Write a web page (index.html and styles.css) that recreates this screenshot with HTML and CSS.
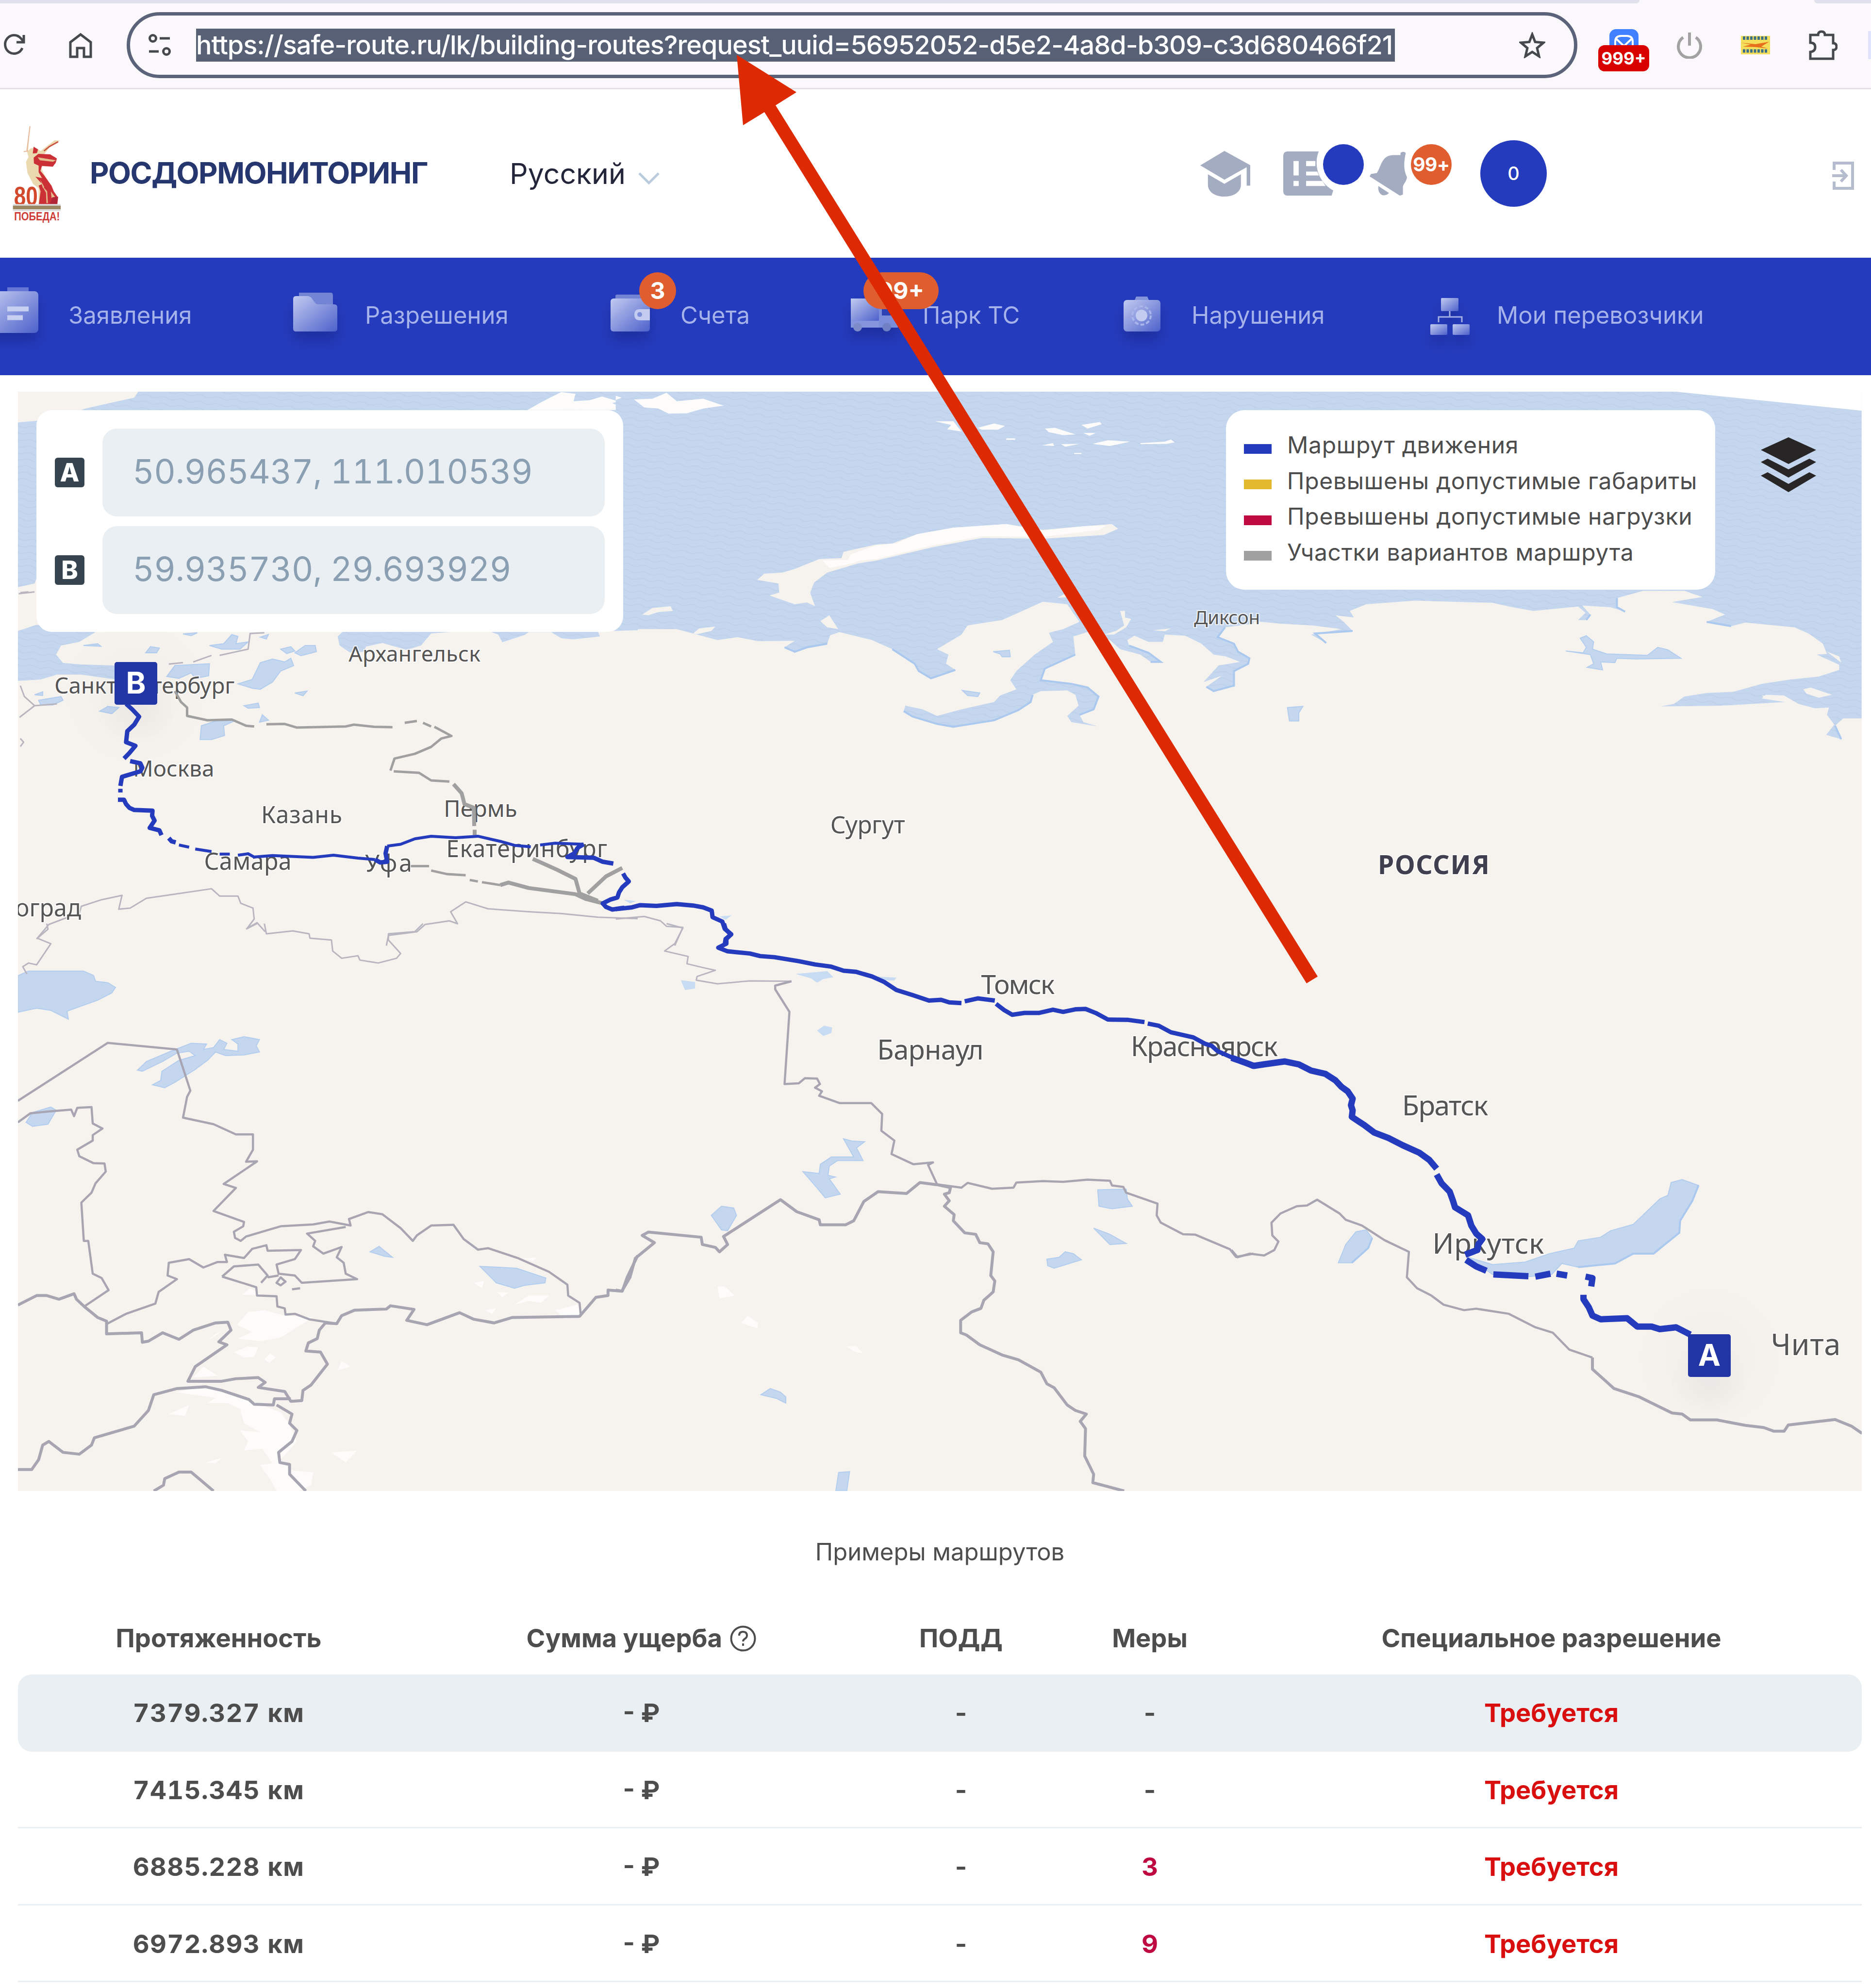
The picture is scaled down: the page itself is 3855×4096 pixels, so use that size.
FILE: index.html
```html
<!DOCTYPE html>
<html lang="ru">
<head>
  <meta charset="UTF-8">
  <meta name="viewport" content="width=device-width, initial-scale=1.0">
  <title>Росдормониторинг - Построение маршрутов</title>
  <link rel="stylesheet" href="styles.css">
</head>
<body>
  <div class="tabstrip">
    <div class="tabs-left"></div>
    <div class="tabs-right"></div>
  </div>
  <div class="toolbar">
    <svg class="reload" viewBox="0 0 47 47"><path d="M40 30A18.500 19 0 1 1 37 10L42 16M43 3V18H28"/></svg>
    <svg class="home" viewBox="0 0 50 54"><path d="M4 51V21L25 5L46 21V51H32V33H18V51Z"/></svg>
    <div class="omnibox">
      <svg class="tune" viewBox="0 0 50 46"><circle cx="11" cy="9" r="6.500"/><path d="M25 9H46M3 36H23"/><circle cx="39" cy="36" r="6.500"/></svg>
      <span class="url">https://safe-route.ru/lk/building-routes?request_uuid=56952052-d5e2-4a8d-b309-c3d680466f21</span>
      <svg class="star" viewBox="0 0 54 54"><path d="M27 5L33 20.500L50 22L37 33L41 50L27 41L13 50L17 33L4 22L21 20.500Z"/></svg>
    </div>
    <div class="ext-mail">
      <svg viewBox="0 0 60 60"><rect width="60" height="60" rx="14" fill="#4080ff"/><path d="M12 48V26Q12 14 24 14H36Q48 14 48 26V48M13 19L30 35L47 19" fill="none" stroke="#fff" stroke-width="4"/></svg>
      <span>999+</span>
    </div>
    <svg class="power" viewBox="0 0 54 56"><path d="M14 12A23 23 0 1 0 40 12M27 2V29"/></svg>
    <svg class="ext-flag" viewBox="0 0 60 38">
      <rect width="60" height="38" fill="#f3df5c"/>
      <path d="M4 4.500H56M4 31H56" stroke="#3d6f86" stroke-width="7" stroke-dasharray="5 2.500"/>
      <path d="M0 14L30 17L58 12L42 22L56 26L30 23L4 22L20 18Z" fill="#e8701d"/>
    </svg>
    <svg class="puzzle" viewBox="0 0 60 62"><path d="M4 10H20Q20 3 27 3T34 10H51V27Q58 27 58 34T51 41V59H4V45Q14 44 14 35T4 26Z"/></svg>
    <div class="ext-cut"></div>
  </div>

  <header class="header">
    <svg class="logo" viewBox="75 60 350 680">
      <path d="M203 78L191 170L181 245L193 285L176 320L186 395L225 470L262 500L262 612H390L385 560L345 480L295 395L275 350H350L385 310L375 285L300 268L340 215L408 175L370 172L275 245L240 222L205 228L190 245Z" fill="#ebd9af"/>
      <path d="M203 76L192 165L182 245M160 250L190 245" stroke="#e5b99a" stroke-width="7" fill="none"/>
      <path d="M228 216L258 235L250 260L222 262ZM260 265L340 268L386 296L378 326L358 352L285 346L274 380L300 412L350 482L365 520L390 556L388 616H262L275 520L262 480L285 470L240 420L285 430L262 390L262 345L230 330L228 290Z" fill="#cb3037"/>
      <path d="M255 288L380 308L360 318L270 308ZM285 480L320 520L325 600L315 600L312 530ZM345 520L375 560L350 565ZM272 440L300 490L292 500Z" fill="#e3bd8e"/>
      <path d="M298 245L335 215L395 182" stroke="#c9513f" stroke-width="9" fill="none"/>
      <path d="M355 560L395 556L388 616H335Z" fill="#b02636"/>
      <text class="logo-80" x="94" y="616" textLength="162" lengthAdjust="spacingAndGlyphs">80</text>
      <rect x="87" y="606" width="325" height="12" fill="#ddd"/>
      <rect x="87" y="617" width="325" height="25" fill="#9a8660"/>
      <rect x="87" y="642" width="325" height="12" fill="#ddd"/>
      <text class="logo-pobeda" x="96" y="716" textLength="310" lengthAdjust="spacingAndGlyphs">ПОБЕДА!</text>
    </svg>
    <span class="brand">РОСДОРМОНИТОРИНГ</span>
    <span class="lang">Русский</span>
    <svg class="chevron" viewBox="0 0 44 26"><path d="M2 3L22 23L42 3"/></svg>
    <svg class="icon-edu" viewBox="53 153 209 312" preserveAspectRatio="none">
      <path d="M154 153L262 250V390H247V264L154 350L53 252Z"/>
      <path d="M85 312L154 378L223 312V385C223 430 195 465 154 465S85 430 85 385Z"/>
    </svg>
    <div class="icon-docs">
      <svg viewBox="400 165 212 300" preserveAspectRatio="none">
        <path d="M418 165H551C530 250 545 370 612 430L605 465H418Q402 462 402 435V195Q402 168 418 165Z"/>
        <path d="M445 230H467V328H445ZM445 365H467V400H445ZM498 230H537V265H498ZM498 302H545L552 328H498ZM498 365H566L580 400H498Z" fill="#fff"/>
      </svg>
      <span class="dot"></span>
    </div>
    <div class="icon-bell">
      <svg viewBox="765 165 155 300" preserveAspectRatio="none">
        <path d="M893 190V175Q904 160 915 175C906 240 905 290 920 340C918 370 905 385 903 405V458L890 465L765 335L770 318L795 312C815 260 815 190 865 190Z"/>
        <path d="M801 400L845 447Q836 465 820 463Q798 450 801 400Z"/>
      </svg>
      <span class="count">99+</span>
    </div>
    <span class="avatar">0</span>
    <svg class="logout" viewBox="0 0 46 60"><path d="M4 18V4H42V56H4V42M0 30H28M18 18L29 30L18 42"/></svg>
  </header>

  <nav class="nav">
    <a class="nav-item">
      <svg viewBox="0 0 100 110">
        <defs>
          <linearGradient id="glass" x1="0" y1="0" x2="1" y2="1">
            <stop offset="0" stop-color="#c3cbf0"/>
            <stop offset="1" stop-color="#4c61cb"/>
          </linearGradient>
        </defs>
        <path d="M18 -3H62V20H18Z" fill="#6376d1"/>
        <rect x="-22" y="5" width="104" height="86" rx="8" fill="url(#glass)"/>
        <path d="M18 41.500H62M18 59.500H50" stroke="#c8d0f2" stroke-width="10"/>
      </svg>
      <span>Заявления</span>
    </a>
    <a class="nav-item">
      <svg viewBox="0 0 100 110">
        <path d="M8 8H74Q78 8 78 14V45H8Z" fill="#7384d5"/>
        <path d="M2 15H26Q32 15 36 22L42 30Q44 32 50 32H80Q87 32 87 38V82Q87 88 81 88H2Q-4 88 -4 82V21Q-4 15 2 15Z" fill="url(#glass)"/>
      </svg>
      <span>Разрешения</span>
    </a>
    <a class="nav-item">
      <svg viewBox="0 0 100 110">
        <rect x="10" y="12" width="66" height="30" rx="3" fill="#7384d5"/>
        <rect y="20" width="81" height="68" rx="6" fill="url(#glass)"/>
        <path d="M60 42H81V65H60Q49 65 49 53.500T60 42Z" fill="#c3cbf0"/>
        <circle cx="60" cy="53" r="5" fill="#7d8edb"/>
      </svg>
      <span>Счета</span>
      <b class="badge badge-round">3</b>
    </a>
    <a class="nav-item">
      <svg viewBox="0 0 100 110">
        <rect x="-4" y="65" width="97" height="15" fill="#8595dd"/>
        <path d="M54 36H80L93 56V80H54Z" fill="#7b8cdb"/>
        <path d="M60 42H75L84 55H60Z" fill="#2c41b4"/>
        <rect x="-4" y="20" width="58" height="46" fill="url(#glass)"/>
        <circle cx="10" cy="79" r="9" fill="#7d8cc9"/>
        <circle cx="70" cy="79" r="9" fill="#7080c4"/>
      </svg>
      <span>Парк ТС</span>
      <b class="badge badge-wide">99+</b>
    </a>
    <a class="nav-item">
      <svg viewBox="0 0 100 110">
        <path d="M24 30L30 16H53L59 30Z" fill="#8595dd"/>
        <rect x="4" y="23" width="76" height="65" rx="7" fill="url(#glass)"/>
        <circle cx="41" cy="55" r="19" fill="none" stroke="#aab5ea" stroke-width="4" stroke-dasharray="8 4"/>
        <circle cx="41" cy="55" r="12" fill="#c3cbf0"/>
      </svg>
      <span>Нарушения</span>
    </a>
    <a class="nav-item">
      <svg viewBox="0 0 100 110">
        <path d="M47 46V58M24 69V58H72V69" fill="none" stroke="#a3afe6" stroke-width="3"/>
        <rect x="29" y="19" width="36" height="27" rx="2" fill="url(#glass)"/>
        <rect x="7" y="73" width="35" height="22" rx="2" fill="url(#glass)"/>
        <rect x="53" y="73" width="35" height="22" rx="2" fill="url(#glass)"/>
      </svg>
      <span>Мои перевозчики</span>
    </a>
  </nav>

  <main class="content">
    <div class="map">
      <svg class="map-canvas" viewBox="0 0 3799 2265">
        <defs>
          <pattern id="waves" width="44" height="18" patternUnits="userSpaceOnUse" patternTransform="rotate(8)">
            <rect width="44" height="18" fill="#c5d7ef"/>
            <path d="M0 9Q11 3 22 9T44 9" fill="none" stroke="#bdd0e9" stroke-width="2"/>
          </pattern>
        </defs>

        <!-- north-west -->
        <g transform="translate(-37 -36.700) scale(.838 .7513)">
          <path class="sea" d="M340 49H1568V703L1470 706L1475 720L1410 728L1380 725L1355 708L1300 708L1290 716L1235 736L1225 715L1190 700L1060 712L1035 745L1000 757L940 738L900 748L895 762L860 764L835 745L830 720L850 700L600 650L90 560L85 575L44 585V133L130 125L210 95L330 65Z"/>
          <path class="sea" d="M44 705L90 688L235 708L195 735L150 745L138 770L155 793L200 797L285 800V838L200 825L140 825L100 838L44 842Z"/>
          <path class="snow" d="M1297 99L1330 78L1380 50L1415 55L1410 75L1450 72L1480 62L1520 75L1568 50V62L1505 80L1545 99Z"/>
          <path class="lake" d="M410 830L430 800L515 795L513 828L480 835L470 820L440 835ZM585 850L620 838L640 792L670 782L700 790L715 780L722 800L690 815L670 845L640 865L620 862ZM515 745L550 740L570 715L585 720L580 740L610 735L590 755L545 755ZM690 755L715 748L725 760L705 767ZM725 765L750 745L775 745L778 762L740 773ZM358 765L370 748L392 752L385 765ZM492 1003L495 965L530 952L580 950L550 965L552 992L520 1003ZM600 910L635 903L638 915L610 917ZM725 875L755 870L745 883ZM638 955L645 935L660 950ZM245 925L265 912L292 915L275 932ZM95 895L150 885L155 895L130 908L100 908ZM205 745L240 740L248 747ZM450 713L485 710L470 718ZM85 880L105 872L105 882ZM640 722L660 715L655 727Z"/>
          <path class="border thin" d="M415 796L450 792M475 790L520 772M540 772L610 755L615 712L650 710M46 603L85 598M50 855L60 885L85 910L48 942M85 910L140 905M50 1000L58 1010L50 1022M50 600L70 598"/>
          <path class="border thin" d="M90 1550L120 1510L155 1495L195 1480L200 1460L250 1442L300 1430L292 1468L320 1465L360 1438L440 1425L520 1412L540 1432L585 1432L592 1452L622 1465L625 1495L608 1520L632 1505L652 1530M950 1568L955 1540L1025 1530L1045 1510L1105 1500L1125 1508L1108 1475L1145 1448L1200 1467L1300 1475L1380 1480L1470 1490L1568 1494"/>
        </g>

        <!-- north -->
        <g transform="translate(1231.700 -36.700) scale(.838 .7513)">
          <path class="sea" d="M0 49H1568V685L1498 695L1480 722L1520 740L1530 762L1558 780L1555 795L1520 815L1520 855L1470 870L1452 858L1490 828L1445 845L1482 800L1535 790L1500 775L1470 770L1440 740L1400 718L1350 715L1345 735L1310 735L1275 718L1258 730L1262 745L1310 765L1340 790L1315 790L1290 770L1240 755L1215 730L1160 708L1125 720L1130 770L1055 808L1045 840L1120 850L1160 860L1187 885L1175 920L1140 935L1150 955L1185 967L1120 955L1110 938L1138 910L1130 880L1110 868L1045 870L1025 880L1020 900L990 922L930 950L830 968L790 960L730 940L708 925L712 910L755 920L790 938L850 920L930 900L945 882L985 865L970 840L985 815L1030 770L1075 735L1065 710L1100 700L1140 680L1110 632L1050 625L1000 650L950 675L865 690L850 715L790 755L818 770L812 795L835 812L775 835L745 815L735 795L680 755L630 730L550 708L527 717L520 740L470 750L440 762L415 750L440 732L350 733L300 722L250 730L190 712L150 700L60 700L0 705Z"/>
          <path class="coast" d="M1498 695L1480 722L1520 740L1530 762L1558 780L1555 795L1520 815L1520 855L1470 870L1452 858M1130 770L1055 808L1045 840L1120 850L1160 860L1187 885L1175 920L1140 935M1025 880L1020 900L990 922L930 950L830 968L790 960L730 940L708 925M835 812L775 835L745 815L735 795L680 755M520 740L470 750L440 762L415 750M1262 745L1310 765L1340 790L1315 790"/>
          <path class="land" d="M348 565L365 548L410 545L440 535L500 508L555 505L560 488L640 468L680 465L740 440L830 422L960 412L1050 428L1150 418L1220 412L1235 425L1200 442L1050 452L900 450L780 475L640 512L595 520L520 545L488 572L478 600L490 637L470 627L440 632L378 608L402 600L400 575Z"/>
          <path class="snow" d="M508 512L570 510L578 495L640 470L690 465L740 440L830 422L960 412L1050 430L1150 418L1205 416L1190 428L1050 447L900 445L780 470L640 508L600 512L580 520L525 532Z"/>
          <path class="snow" d="M45 70L90 68L125 52L150 75L215 68L265 87L215 95L175 108L130 109L105 95L70 92ZM785 130H830L850 158L815 152L825 140ZM890 148L930 136L957 143L940 153L900 153ZM960 177H982V181H960ZM1055 150L1080 148L1130 166L1100 168L1065 160ZM1145 140L1190 132L1195 138L1160 150ZM1150 162L1180 162L1165 170ZM1048 196L1075 190L1078 198ZM1095 193L1140 192L1105 200ZM1172 192L1210 182L1265 186L1215 198ZM1290 190L1350 186L1365 180L1374 188L1355 192L1290 193ZM1127 217H1145V220H1127ZM0 60L15 65L0 72Z"/>
          <path class="land" d="M65 660L90 642L135 637L140 650L105 653L80 662ZM190 712L205 698L245 693L235 705L200 714ZM503 678L525 662L547 700L520 695ZM1086 614L1110 600L1130 612ZM1200 715L1230 705L1250 690L1240 650L1252 650L1252 668L1267 672L1255 695L1225 715ZM1320 703L1365 698L1350 706Z"/>
          <path class="lake" d="M928 762L968 758L970 776L950 776L945 768ZM852 868L895 875L890 885L865 882Z"/>
          <path class="pale" d="M255 1488L285 1485L270 1497ZM20 1442L50 1446L35 1452Z"/>
          <path class="border thin" d="M0 1495L70 1488L110 1500L125 1515L165 1518L145 1568"/>
        </g>

        <!-- north-east -->
        <g transform="translate(2500.400 -36.700) scale(.8403 .7513)">
          <path class="sky" d="M1085 40V49L1545 101V40Z"/>
          <path class="sea" d="M0 49H1090L1545 101V945H1500L1480 965L1495 1002L1458 990L1478 962L1460 935L1465 915L1430 917L1390 905L1355 882L1310 880L1300 890L1357 900L1200 910L1052 912L1085 905L1110 885L1165 875L1230 872L1300 850L1370 838L1440 830L1490 812L1490 798L1435 770L1460 768L1450 740L1415 712L1380 695L1260 682L1225 692L1165 680L1210 660L1180 645L1080 626L1155 612L1110 595L1010 595L945 615L945 640L965 652L930 640L860 635L880 660L870 675L850 675L868 655L850 638L830 640L740 650L690 640L640 628L450 622L330 632L290 650L300 668L255 662L275 680L297 705L205 712L232 738L195 715L270 700L200 690L120 685L54 678H0Z"/>
          <path class="land" d="M1402 865L1420 860L1472 880L1440 888L1410 877ZM1300 882L1330 882L1350 895L1310 890ZM1460 762L1490 775L1495 792Z"/>
          <path class="lake" d="M820 760L862 765L870 750L855 725L870 718L888 735L885 755L920 768L1020 772L1045 750L1070 757L1102 780L990 782L945 780L940 792L905 790L910 812L872 805L888 795L880 770ZM137 915L175 912L165 930L165 952H142Z"/>
          <path class="coast" d="M945 615V640L965 652M880 660L870 675M297 705L205 712L232 738M1225 692L1165 680M1480 965L1495 1002"/>
        </g>

        <!-- south-west -->
        <g transform="translate(-37 1096) scale(.838 .7513)">
          <path class="lake" d="M44 143L70 130H205L230 142L235 158L265 162L284 175L275 190L240 210L165 240L168 262L125 238L90 232L44 243Z"/>
          <path class="lake" d="M338 402L360 378L420 350L470 328L508 330L500 345L525 340L540 318L558 328L550 345L585 350L585 330L570 318L600 310L638 318L630 335L638 352L600 360L555 362L530 352L510 375L480 400L430 435L405 450L375 442L395 430L398 405L440 375L480 362L465 350L435 355L400 378L350 405ZM64 545L80 518L125 503L138 512L118 550L80 556ZM910 900L932 885L965 915L945 912ZM1180 940L1220 942L1270 945L1342 972L1340 985L1290 992L1265 1000L1220 985Z"/>
          <path class="snow" d="M583 1100L610 1065L650 1060L700 1075L770 1080L740 1100L690 1135L640 1145L585 1138L620 1120ZM575 1175L610 1160L635 1162L625 1188L600 1190ZM650 1195L665 1178L678 1190L662 1205ZM475 1245L500 1215L535 1240ZM430 1285L500 1270L560 1280L620 1310L690 1340L710 1370L730 1420L690 1470L720 1500L770 1505L765 1540L735 1556H680L665 1525L640 1485L670 1480L645 1440L600 1445L610 1420L590 1390L640 1395L600 1370L590 1330L560 1315L510 1315L530 1300ZM415 1345L465 1320L455 1350ZM505 1478L545 1465L530 1480ZM815 1450L878 1445L850 1478ZM830 1225L840 1200L862 1215ZM1165 985L1190 980L1185 1000ZM1222 1010L1250 1012L1235 1025ZM1265 1045L1300 1020L1350 1020L1330 1040L1300 1035ZM1192 1060L1220 1055L1210 1070ZM1365 1060L1420 1045L1428 1070L1390 1085ZM1285 918L1320 916L1310 925ZM595 1018L615 1000L645 1018ZM508 1145L530 1125L550 1115Z"/>
          <path class="border thin" d="M115 0L118 15L92 40L125 55L90 113L70 108L56 118L66 138M605 15L632 0M650 0L655 28L720 20L760 28L762 40L815 45L818 75L840 95L880 88L885 100L930 108L975 95L985 82L955 45L955 28L1020 22L1040 0"/>
          <path class="border mid" d="M44 486L265 327L435 345L468 458L460 475L450 532L525 550L580 578H622L622 620L605 653L632 652L550 714L580 725L525 788L600 818L598 830L575 845L578 862L592 870L605 858L690 830L770 825L810 817L862 828L858 810L905 791L940 797L985 835L1015 870L1025 855L1060 828L1115 826L1140 865L1175 894L1200 890L1275 918L1350 955L1395 990L1397 1020L1425 1040L1428 1075M44 545L75 520L120 515L175 510L182 528L190 505L225 503L228 548L252 562L228 580V595L190 620L195 638L230 657L257 658L260 680L235 712L225 738L200 765L206 870H217L228 960L250 972L267 1005L207 1050"/>
          <path class="border" d="M44 1046L90 1020H115L145 1030L182 1015L188 1030L207 1050L240 1080L262 1090V1125L348 1122L350 1148L365 1145L400 1122L440 1140L475 1115L530 1095L560 1093L568 1115L538 1147L558 1155L480 1215L462 1255L545 1255L580 1248L635 1245L652 1258L635 1272L700 1283L715 1310L742 1308L745 1280L765 1265L805 1208L788 1175L752 1172L758 1150L780 1138L785 1115L800 1095L828 1097L840 1075L872 1060L950 1057L960 1048L1018 1058L1000 1088L1050 1100L1130 1067L1165 1085L1215 1095L1260 1080L1425 1077L1465 1025L1495 1020V1005L1530 1008L1542 970L1568 910"/>
          <path class="border mid" d="M262 1098L310 1070L382 1042L390 1010L435 975L412 965L415 930L465 920L500 943L535 928L558 928L553 908L600 917L620 892L655 882L658 897L740 895L725 920L680 935L685 960L725 965L742 985L878 975L850 960L845 930L828 915L840 887L795 905L770 885L775 870L755 850L850 832M546 968L575 940L635 935L658 965L642 985M546 968L630 997L632 1020L680 1022L682 1050L700 1055L702 1072L725 1070L760 1085L828 1097M658 970L685 965M680 985L690 970L702 982L690 992ZM718 1003L738 1000"/>
          <path class="border" d="M44 1497H78L95 1470L105 1430L120 1420L155 1450L195 1455L225 1430L232 1410L330 1378L365 1335L378 1292L435 1275L505 1270L545 1280L612 1305L625 1318L672 1320L675 1303H715M680 1320L718 1345L712 1370L730 1390L718 1420L685 1450L688 1478L712 1483L712 1510L752 1556M378 1556L402 1540L405 1522L440 1504H470L525 1556"/>
        </g>

        <!-- south -->
        <g transform="translate(1231.700 1096) scale(.838 .7513)">
          <path class="pale" d="M442 138L520 130L535 147L510 152L495 162L480 150ZM640 145L690 148L685 156L650 155ZM160 155L195 160L195 178L170 182ZM495 293L512 280L532 285L530 300L510 308Z"/>
          <path class="lake" d="M235 800L260 775L290 780L297 800L275 842L260 840ZM460 680L500 685L503 660L530 640L585 640L560 590L580 596L612 598L592 615L608 650L545 650L525 665L522 690L540 695L525 700L552 742L515 752L495 725ZM1185 730L1255 728L1258 755L1270 775L1220 782L1188 775ZM1175 835L1215 852L1255 877L1215 880ZM1060 920L1090 915L1105 900L1125 905L1145 922L1078 945L1062 938ZM357 1292L380 1275L405 1285L418 1298V1315L395 1302ZM548 1505L575 1503L568 1556H541Z"/>
          <path class="snow" d="M250 995L268 995L292 1020L255 1028ZM308 1095L325 1075L350 1095L348 1110ZM567 1160L590 1158L608 1178L590 1175Z"/>
          <path class="border thin" d="M125 0L165 12L145 55L120 75L178 90L175 110L212 120L245 128L200 145L198 155L250 165L330 157L432 158"/>
          <path class="border mid" d="M432 158L392 170V180L427 242L415 440L450 438L465 424L495 425L502 440L490 450L507 460L500 472L550 492L628 492L655 522L653 568L685 595L678 632L732 660L780 655L768 662L790 715L850 724L865 711L925 727L978 724L985 710L1050 706L1100 708L1160 702L1215 705L1220 718L1248 722L1255 738L1332 768L1330 800L1340 820L1395 852L1425 853L1510 893L1525 914L1568 905"/>
          <path class="border" d="M0 1005L15 1008L35 970L48 918L95 875L65 855L80 846L210 860L213 880L245 888L255 900L275 880L265 858L405 757L445 790L500 812L503 826H565L585 815L610 762L645 735L715 740L748 710L790 716L823 724L820 738L808 742L820 760L808 775L832 798L830 815L858 848L885 852L895 875L915 878L928 900L922 965L932 980L928 1010L905 1033L898 1055L875 1065L848 1088V1122L862 1128L895 1155L950 1183L990 1196L1045 1230L1060 1262L1078 1273L1110 1320L1130 1335L1157 1345L1142 1365L1155 1385L1153 1460L1175 1510L1173 1533L1250 1556"/>
        </g>

        <!-- south-east -->
        <g transform="translate(2500.400 1096) scale(.8403 .7513)">
          <path class="lake" d="M580 915L640 935L720 928L780 905L840 890L850 870L905 860L930 842L985 825L1050 755L1070 745L1078 710L1105 702L1145 718L1130 760L1100 815L1098 848L1060 882L1035 905L985 905L940 932L850 942L810 932L785 962L730 968L640 962ZM262 930L280 880L305 845L330 840L345 862L335 890L295 930Z"/>
          <path class="coast" d="M1145 718L1130 760L1100 815L1098 848L1060 882L1035 905L985 905L940 932L850 942M345 862L335 890L295 930"/>
          <path class="border mid" d="M0 895L15 915L45 905L80 910L105 895L115 872L100 855L98 820L120 795L160 775L185 773L210 757L265 795L280 812L320 828L375 868L435 900L430 970L455 1000L490 1020L520 1045L570 1060L600 1056L680 1070L745 1107L788 1122L828 1168L885 1190"/>
          <path class="border" d="M885 1190V1222L938 1275L1000 1298L1080 1342L1105 1345L1125 1361L1190 1361L1260 1376L1305 1382L1330 1392H1355L1365 1375L1480 1360L1520 1378L1546 1398"/>
        </g>

        <g class="labels" transform="translate(-37 -807) scale(2.6118)">
          <text x="275" y="522" font-size="17" textLength="104">Архангельск</text>
          <text x="43" y="547" font-size="17.500" textLength="142">Санкт-Петербург</text>
          <text x="105" y="612.500" font-size="17.500" textLength="64">Москва</text>
          <text x="206" y="649.500" font-size="18.500" textLength="64">Казань</text>
          <text x="350" y="644.500" font-size="18" textLength="58">Пермь</text>
          <text x="352" y="676" font-size="18.500" textLength="127">Екатеринбург</text>
          <text x="161" y="686" font-size="18.500" textLength="69">Самара</text>
          <text x="288" y="687.500" font-size="18.500" textLength="37">Уфа</text>
          <text x="64" y="723" font-size="18.500" text-anchor="end">Волгоград</text>
          <text x="655" y="657.500" font-size="19" textLength="59">Сургут</text>
          <text x="942" y="492.500" font-size="14.800" textLength="52">Диксон</text>
          <text class="country" x="1087" y="689.500" font-size="20.500" textLength="88">РОССИЯ</text>
          <text x="774" y="784" font-size="21" textLength="58">Томск</text>
          <text x="692" y="836" font-size="21.500" textLength="84">Барнаул</text>
          <text x="892" y="833" font-size="21.500" textLength="116">Красноярск</text>
          <text x="1106" y="880" font-size="22" textLength="68">Братск</text>
          <text x="1130" y="989" font-size="22.500" textLength="88">Иркутск</text>
          <text x="1397" y="1069" font-size="23.500" textLength="55">Чита</text>
        </g>

        <!-- route variants -->
        <g class="variant" transform="translate(-37 -36.700) scale(.838 .7513)">
          <path d="M430 870L445 900L460 915V938L510 950L570 948L605 965L625 967M655 961L700 960L730 970L850 967L870 962L920 968L965 969M995 957L1025 952M1040 957L1060 967M1068 968L1110 993L1085 1000L1060 1023L1020 1042L970 1055L960 1088M968 1090L1030 1094L1060 1115L1105 1118M1010 1350H1055M1060 1362L1100 1372L1145 1375M1155 1388L1175 1392M1185 1394L1230 1402"/>
          <path class="wide" d="M1115 1125L1135 1150L1142 1180L1165 1190L1166 1240M1167 1250V1265M1230 1402L1250 1395L1300 1410L1415 1427L1440 1440L1482 1452M1310 1330L1370 1360L1415 1385L1425 1425L1470 1445M1445 1425L1490 1378L1530 1355"/>
        </g>

        <!-- main route -->
        <g class="route">
          <g transform="translate(-37 -36.700) scale(.838 .7513)">
            <path class="fine" d="M440 1292L465 1298M480 1303L520 1310M540 1317H565M585 1320L610 1316L625 1325L670 1321L770 1326L820 1320L880 1328L922 1332M952 1295L985 1290L1020 1275L1060 1268L1120 1272L1175 1268L1230 1282L1265 1293L1305 1297M1328 1292L1365 1287L1435 1290"/>
            <path d="M310 905L325 920L342 940L330 962L313 980L310 1010L333 1020L318 1040L305 1055M320 1062L345 1068L350 1080L345 1090L300 1105L296 1130M296 1138V1148M290 1168L305 1168L310 1180L318 1190L330 1196L375 1198L374 1212L380 1225L368 1245L392 1252L397 1265M415 1273L422 1282L432 1285M922 1332L935 1340L952 1338L948 1315L952 1295M1435 1290L1420 1300L1412 1315L1395 1325L1460 1327L1482 1338L1508 1343M1532 1370L1538 1382L1546 1392L1530 1408L1522 1422L1518 1436L1500 1442L1482 1452L1490 1462L1505 1469L1535 1464"/>
          </g>
          <g transform="translate(1231.700 -36.700) scale(.838 .7513)">
            <path d="M0 1468L40 1463L60 1457L100 1459L150 1454L190 1458L215 1463L236 1472L238 1490L262 1502L268 1522L284 1537L270 1550L268 1565"/>
          </g>
          <g transform="translate(1231.700 1096) scale(.838 .7513)">
            <path d="M266 0L270 15L283 30L272 42V55L252 66L275 76L330 82L355 89L390 92L450 103L490 112L530 118L560 129L590 132L630 145L660 160L690 182L730 196L770 211L800 209L820 216L850 218M858 213L890 205L932 211M935 220L955 237L975 250L1005 245L1040 245L1075 236L1100 242L1130 235L1155 234L1180 245L1210 263L1260 264L1300 270M1308 274L1335 280L1365 298L1420 312L1450 330L1465 335L1480 350L1525 372L1568 393"/>
          </g>
          <g class="strong" transform="translate(2500.400 1096) scale(.8403 .7513)">
            <path d="M0 368L30 380L55 390L85 385L130 378L165 386L195 403L230 412L255 430L270 448L285 460L297 480L293 498L297 512L295 530L325 552L350 573L385 588L420 608L460 628L485 648L503 672M503 688L515 712L535 735L543 760L548 778L580 800L588 828L600 850L615 865L605 880L603 895L573 908M575 922L600 940L625 952M642 962L728 967M745 968L782 960M797 960L823 965M868 968L885 972L882 995M863 1018V1030L876 1052L885 1075L905 1085L970 1082L995 1105L1030 1105L1050 1112L1090 1107L1125 1127"/>
          </g>
        </g>

        <g class="halo">
          <circle cx="3485" cy="1990" r="140"/>
          <circle cx="3485" cy="1990" r="95"/>
          <circle cx="242" cy="620" r="140"/>
          <circle cx="242" cy="620" r="95"/>
        </g>
      </svg>

      <span class="marker marker-b">B</span>
      <span class="marker marker-a">A</span>

      <div class="points">
        <div class="point"><b>A</b><div class="point-input">50.965437, 111.010539</div></div>
        <div class="point"><b>B</b><div class="point-input">59.935730, 29.693929</div></div>
      </div>

      <ul class="legend">
        <li><i class="c-route"></i>Маршрут движения</li>
        <li><i class="c-size"></i>Превышены допустимые габариты</li>
        <li><i class="c-load"></i>Превышены допустимые нагрузки</li>
        <li><i class="c-variant"></i>Участки вариантов маршрута</li>
      </ul>

      <svg class="layers" viewBox="0 0 114 113">
        <path d="M57 0L114 26L57 55L0 26Z"/>
        <path d="M0 51L14 44L57 66L100 44L114 51L57 83Z"/>
        <path d="M0 79L14 72L57 96L100 72L114 79L57 113Z"/>
      </svg>
    </div>

    <h2 class="title">Примеры маршрутов</h2>

    <table class="routes">
      <colgroup>
        <col class="col-length"><col class="col-damage"><col class="col-podd"><col class="col-measures"><col>
      </colgroup>
      <thead>
        <tr>
          <th>Протяженность</th>
          <th>Сумма ущерба <svg class="help" viewBox="0 0 54 54"><circle cx="27" cy="27" r="24.500"/><path d="M19 21Q19 13 27 13T35 21Q35 25 30 28Q27 30 27 33M27 37V42"/></svg></th>
          <th>ПОДД</th>
          <th>Меры</th>
          <th>Специальное разрешение</th>
        </tr>
      </thead>
      <tbody>
        <tr class="active"><td>7379.327 км</td><td>- ₽</td><td>-</td><td>-</td><td class="required">Требуется</td></tr>
        <tr><td>7415.345 км</td><td>- ₽</td><td>-</td><td>-</td><td class="required">Требуется</td></tr>
        <tr><td>6885.228 км</td><td>- ₽</td><td>-</td><td class="measures">3</td><td class="required">Требуется</td></tr>
        <tr><td>6972.893 км</td><td>- ₽</td><td>-</td><td class="measures">9</td><td class="required">Требуется</td></tr>
      </tbody>
    </table>
  </main>

  <svg class="arrow" viewBox="0 0 3855 4096">
    <path d="M1518 113L1641 190L1598 217L2715 2012L2692 2026L1575 231L1531 258Z"/>
  </svg>
</body>
</html>
```
FILE: styles.css
```css
* {
  box-sizing: border-box;
}
body {
  margin: 0;
  width: 3855px;
  height: 4096px;
  overflow: hidden;
  position: relative;
  background: #fff;
  color: #4d4d4d;
  font-family: Inter, "Liberation Sans", sans-serif;
}
svg {
  display: block;
  flex: none;
}

/* browser */
.tabstrip {
  display: flex;
  justify-content: space-between;
  height: 7px;
  background: #faf8fa;
}
.tabs-left {
  width: 3378px;
  background: #dfe1ec;
  border-bottom-right-radius: 7px;
}
.tabs-right {
  width: 117px;
  background: #dfe1ec;
  border-bottom-left-radius: 7px;
}
.toolbar {
  display: flex;
  align-items: center;
  height: 177px;
  padding: 0 0 3px 6px;
  background: #faf8fa;
  border-bottom: 3px solid #e2e0e2;
}
.toolbar svg {
  fill: none;
  stroke: #45484d;
  stroke-width: 5;
}
.reload {
  width: 47px;
}
.home {
  width: 50px;
  margin-left: 88px;
}
.omnibox {
  display: flex;
  align-items: center;
  flex: none;
  width: 2989px;
  height: 136px;
  margin-left: 70px;
  padding: 0 59px 0 36px;
  border: 7px solid #5a6379;
  border-radius: 68px;
}
.tune {
  width: 50px;
}
.url {
  margin-left: 50px;
  width: 2470px;
  height: 68px;
  line-height: 68px;
  background: #586076;
  color: #fff;
  font-size: 54px;
  font-weight: 500;
  letter-spacing: -0.97px;
  white-space: nowrap;
}
.star {
  width: 54px;
  margin-left: auto;
}
.ext-mail {
  position: relative;
  flex: none;
  width: 105px;
  height: 66px;
  margin-left: 43px;
}
.ext-mail svg {
  width: 60px;
  margin: 0 auto;
  stroke: none;
}
.ext-mail span {
  position: absolute;
  left: 0;
  top: 33px;
  width: 105px;
  height: 54px;
  border-radius: 13px;
  background: #d90000;
  color: #fff;
  font-size: 35px;
  font-weight: 700;
  line-height: 54px;
  text-align: center;
}
.toolbar .power {
  width: 54px;
  margin-left: 56px;
  stroke: #a2a2a2;
  stroke-width: 6;
}
.toolbar .ext-flag {
  width: 60px;
  margin-left: 79px;
  stroke: none;
}
.puzzle {
  width: 60px;
  margin-left: 79px;
}
.ext-cut {
  width: 6px;
  height: 58px;
  margin-left: 63px;
  background: #dfe3fb;
}

/* header */
.header {
  display: flex;
  align-items: center;
  height: 347px;
  padding-left: 23px;
}
.logo {
  width: 106px;
  height: 206px;
  overflow: visible;
}
.logo-80 {
  fill: #d2492b;
  font-family: "Liberation Sans", sans-serif;
  font-size: 184px;
  font-weight: 700;
}
.logo-pobeda {
  fill: #cf3b37;
  font-family: "Liberation Sans", sans-serif;
  font-size: 82px;
  font-weight: 700;
}
.brand {
  width: 865px;
  margin-left: 56px;
  margin-top: -4px;
  color: #26366f;
  font-size: 61px;
  font-weight: 700;
  letter-spacing: -1.5px;
}
.lang {
  width: 265px;
  color: #23263a;
  font-size: 59px;
}
.chevron {
  width: 44px;
  margin-top: 18px;
  fill: none;
  stroke: #b9cbdc;
  stroke-width: 5;
}
.icon-edu {
  width: 103px;
  height: 94px;
  margin-left: 1114px;
  fill: #a4acc1;
}
.icon-docs {
  position: relative;
  width: 104px;
  margin-left: 67px;
}
.icon-docs svg {
  width: 104px;
  height: 91px;
  fill: #a4acc1;
}
.icon-bell {
  position: relative;
  width: 77px;
  margin-left: 75px;
}
.icon-bell svg {
  width: 77px;
  height: 91px;
  fill: #a4acc1;
}
.dot,
.count {
  position: absolute;
  top: -15px;
  left: 83px;
  width: 84px;
  height: 84px;
  border-radius: 50%;
  background: #243bbd;
}
.count {
  left: 85px;
  background: #df5d2e;
  color: #fff;
  font-size: 39px;
  font-weight: 700;
  letter-spacing: -0.5px;
  line-height: 84px;
  text-align: center;
}
.avatar {
  width: 137px;
  height: 137px;
  margin-left: 151px;
  border-radius: 50%;
  background: #243bbd;
  color: #fff;
  font-size: 38px;
  font-weight: 500;
  line-height: 137px;
  text-align: center;
}
.logout {
  width: 46px;
  margin-left: 588px;
  margin-top: 8px;
  fill: none;
  stroke: #b4bccd;
  stroke-width: 6;
}

/* menu */
.nav {
  display: grid;
  grid-template-columns: 611px 650px 499px 554px 629px 912px;
  height: 242px;
  margin-left: -3px;
  background: #243bbd;
}
.nav-item {
  position: relative;
  display: flex;
  align-items: center;
  color: #a6b3ea;
  font-size: 49px;
  white-space: nowrap;
}
.nav-item span {
  margin-top: -5px;
}
.nav-item svg {
  width: 100px;
  margin-right: 44px;
  margin-top: -4px;
  overflow: visible;
  filter: drop-shadow(0 18px 12px rgba(20, 30, 110, 0.35));
}
.badge {
  position: absolute;
  top: 30px;
  height: 76px;
  border-radius: 38px;
  background: #df5d2e;
  color: #fff;
  font-size: 48px;
  font-weight: 700;
  line-height: 76px;
  text-align: center;
}
.badge-round {
  left: 59px;
  width: 76px;
}
.badge-wide {
  left: 22px;
  width: 155px;
}

/* map */
.content {
  padding: 34px 19px 0 37px;
}
.map {
  position: relative;
  height: 2265px;
  overflow: hidden;
  background: #f6f3ee;
}
.map-canvas {
  width: 3799px;
  height: 2265px;
}
.sea {
  fill: url(#waves);
}
.sky {
  fill: #fff;
}
.land {
  fill: #f6f3ee;
}
.snow {
  fill: #fdfcfa;
}
.lake {
  fill: #c5d7ef;
  stroke: #b3cdef;
  stroke-width: 2;
  vector-effect: non-scaling-stroke;
}
.pale {
  fill: #c7dcf3;
}
.coast {
  fill: none;
  stroke: #abc8ee;
  stroke-width: 4;
  vector-effect: non-scaling-stroke;
}
.border {
  fill: none;
  stroke: #a7a5b1;
  stroke-width: 6;
  stroke-linejoin: round;
  vector-effect: non-scaling-stroke;
}
.border.mid {
  stroke-width: 4.5px;
}
.border.thin {
  stroke: #b7b5bf;
  stroke-width: 3px;
}
.labels {
  fill: #555;
  font-family: "Noto Sans", sans-serif;
  paint-order: stroke;
  stroke: rgba(255, 255, 255, 0.8);
  stroke-width: 1.5px;
}
.country {
  fill: #3f3f50;
  font-weight: 700;
}
.variant path,
.route path {
  fill: none;
  stroke: #a0a0a0;
  stroke-width: 5;
  stroke-linejoin: round;
  vector-effect: non-scaling-stroke;
}
.variant .wide {
  stroke-width: 8;
}
.route path {
  stroke: #243bbd;
  stroke-width: 9;
}
.route .fine {
  stroke-width: 6;
}
.route .strong path {
  stroke-width: 13;
}
.halo {
  fill: rgba(120, 110, 130, 0.008);
}
.marker {
  position: absolute;
  width: 88px;
  height: 88px;
  border-radius: 5px;
  background: #2135a5;
  box-shadow: 0 45px 50px rgba(60, 60, 90, 0.05);
  color: #fff;
  font-size: 62px;
  font-weight: 700;
  line-height: 86px;
  text-align: center;
}
.marker-b {
  left: 199px;
  top: 557px;
}
.marker-a {
  left: 3441px;
  top: 1942px;
}
.points {
  position: absolute;
  left: 38px;
  top: 38px;
  display: flex;
  flex-direction: column;
  gap: 20px;
  width: 1209px;
  height: 457px;
  padding: 38px;
  border-radius: 32px;
  background: #fff;
}
.point {
  display: flex;
  align-items: center;
  gap: 37px;
}
.point b {
  width: 61px;
  height: 61px;
  border-radius: 6px;
  background: #364450;
  color: #fff;
  font-size: 52px;
  font-weight: 800;
  line-height: 61px;
  text-align: center;
}
.point-input {
  flex: 1;
  height: 181px;
  padding-left: 62px;
  border-radius: 30px;
  background: #e9eff2;
  color: #8b9fb3;
  font-size: 69px;
  font-variant-numeric: tabular-nums;
  letter-spacing: -0.5px;
  line-height: 176px;
}
.legend {
  position: absolute;
  left: 2489px;
  top: 38px;
  width: 1008px;
  height: 370px;
  margin: 0;
  padding: 35px 37px;
  border-radius: 38px;
  background: #fff;
  list-style: none;
}
.legend li {
  display: flex;
  align-items: center;
  height: 73.5px;
  color: #4d4d4d;
  font-size: 48px;
  letter-spacing: 0.7px;
  white-space: nowrap;
}
.legend i {
  width: 57px;
  height: 20px;
  margin: 16px 32px 0 0;
}
.c-route {
  background: #243bbd;
}
.c-size {
  background: #e3b92f;
}
.c-load {
  background: #bf0a41;
}
.c-variant {
  background: #a0a0a0;
}
.layers {
  position: absolute;
  left: 3591px;
  top: 94px;
  width: 114px;
  fill: #272525;
}

/* table */
.title {
  height: 224px;
  margin: 0;
  padding-top: 14px;
  font-size: 49px;
  font-weight: 400;
  line-height: 224px;
  text-align: center;
}
.routes {
  width: 100%;
  table-layout: fixed;
  border-collapse: separate;
  border-spacing: 0;
  font-size: 52.500px;
  font-weight: 700;
  text-align: center;
}
.col-length {
  width: 827px;
}
.col-damage {
  width: 915px;
}
.col-podd {
  width: 402px;
}
.col-measures {
  width: 376px;
}
.routes th {
  height: 154px;
  padding: 3px 0 0;
}
.routes td {
  height: 158.600px;
  padding: 3px 0 0;
  border-bottom: 3px solid #e9eff2;
}
.routes td:first-child {
  font-variant-numeric: tabular-nums;
  letter-spacing: 1.3px;
}
.routes .active td {
  background: #e9eff2;
}
.active td:first-child {
  border-radius: 28px 0 0 28px;
}
.active td:last-child {
  border-radius: 0 28px 28px 0;
}
.routes .measures {
  color: #bf0a41;
}
.routes .required {
  color: #d90f0f;
}
.help {
  display: inline-block;
  width: 54px;
  margin-left: 4px;
  vertical-align: -9px;
  fill: none;
  stroke: #4d4d4d;
  stroke-width: 4;
}

/* pointer drawn over the page */
.arrow {
  position: absolute;
  left: 0;
  top: 0;
  width: 3855px;
  height: 4096px;
  fill: #dd2a03;
}
```
